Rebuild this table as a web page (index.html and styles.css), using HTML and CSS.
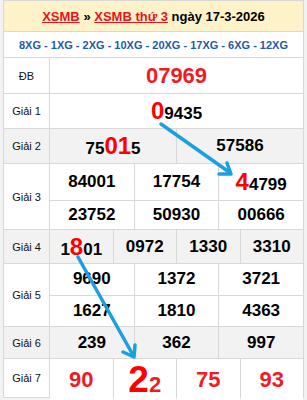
FILE: index.html
```html
<!DOCTYPE html>
<html lang="vi">
<head>
<meta charset="utf-8">
<title>XSMB thứ 3</title>
<link rel="stylesheet" href="styles.css">
</head>
<body>
<div class="page">
  <div class="board">
    <div class="title"><span><a href="#">XSMB</a> » <a href="#">XSMB thứ 3</a> ngày 17-3-2026</span></div>
    <div class="nav"><span>8XG - 1XG - 2XG - 10XG - 20XG - 17XG - 6XG - 12XG</span></div>

    <div class="label r-db">ĐB</div>
    <div class="cells c1 r-db"><div class="num db"><span>07969</span></div></div>

    <div class="label r-g1">Giải 1</div>
    <div class="cells c1 r-g1"><div class="num"><span><span class="hi">0</span>9435</span></div></div>

    <div class="label r-g2 alt">Giải 2</div>
    <div class="cells c2 r-g2 alt">
      <div class="num"><span>75<span class="hi">01</span>5</span></div>
      <div class="num"><span>57586</span></div>
    </div>

    <div class="label r-g3">Giải 3</div>
    <div class="cells c3 r-g3">
      <div class="num"><span>84001</span></div>
      <div class="num"><span>17754</span></div>
      <div class="num"><span><span class="hi">4</span>4799</span></div>
      <div class="num"><span>23752</span></div>
      <div class="num"><span>50930</span></div>
      <div class="num"><span>00666</span></div>
    </div>

    <div class="label r-g4 alt">Giải 4</div>
    <div class="cells c4 r-g4 alt">
      <div class="num"><span>1<span class="hi">8</span>01</span></div>
      <div class="num"><span>0972</span></div>
      <div class="num"><span>1330</span></div>
      <div class="num"><span>3310</span></div>
    </div>

    <div class="label r-g5">Giải 5</div>
    <div class="cells c3 r-g5">
      <div class="num"><span>9690</span></div>
      <div class="num"><span>1372</span></div>
      <div class="num"><span>3721</span></div>
      <div class="num"><span>1627</span></div>
      <div class="num"><span>1810</span></div>
      <div class="num"><span>4363</span></div>
    </div>

    <div class="label r-g6 alt">Giải 6</div>
    <div class="cells c3 r-g6 alt">
      <div class="num"><span>239</span></div>
      <div class="num"><span>362</span></div>
      <div class="num"><span>997</span></div>
    </div>

    <div class="label r-g7">Giải 7</div>
    <div class="cells c4 r-g7">
      <div class="num red"><span>90</span></div>
      <div class="num red"><span><span class="huge">2</span>2</span></div>
      <div class="num red"><span>75</span></div>
      <div class="num red"><span>93</span></div>
    </div>
  </div>

  <svg class="arrows" width="307" height="400" viewBox="0 0 307 400">
    <g fill="none" stroke="#1b9fe0" stroke-width="3.5" stroke-linecap="round" stroke-linejoin="round">
      <path d="M161 124 L229 172"/>
      <path d="M227 163 L231 174 L219 174"/>
      <path d="M78 257 L133 355"/>
      <path d="M135 345 L134 357 L123 352"/>
    </g>
  </svg>
</div>
</body>
</html>
```

FILE: styles.css
```css
* { box-sizing: border-box; }

html, body {
  margin: 0;
  padding: 0;
  background: #f2f2f2;
}

body {
  font-family: "Liberation Sans", Arial, sans-serif;
  color: #000;
}

.page {
  position: relative;
  width: 307px;
  height: 400px;
  overflow: hidden;
}

.board {
  margin-left: 3px;
  width: 301px;
  display: grid;
  grid-template-columns: 45px 1fr;
  grid-template-rows: 30px 25px 35px 34px 34px 65px 33px 62px 31px 38px;
  gap: 1px;
  background: #d8d8d8;
  border: 1px solid #d8d8d8;
}

.title {
  grid-column: 1 / 3;
  background: #fdf2c8;
  display: flex;
  align-items: center;
  justify-content: center;
  font-size: 13px;
  font-weight: bold;
  white-space: nowrap;
}

.title a {
  color: #e8141c;
  text-decoration: underline;
}

.nav {
  grid-column: 1 / 3;
  background: #fff;
  display: flex;
  align-items: center;
  justify-content: center;
  font-size: 11px;
  font-weight: bold;
  color: #1d5ca8;
  white-space: nowrap;
}

.label {
  background: #fff;
  display: flex;
  align-items: center;
  justify-content: center;
  font-size: 11px;
  color: #111;
}

.cells {
  display: grid;
  gap: 1px;
  background: #d8d8d8;
}

.c1 { grid-template-columns: 1fr; }
.c2 { grid-template-columns: 1fr 1fr; }
.c3 { grid-template-columns: 1fr 1fr 1fr; }
.c4 { grid-template-columns: 1fr 1fr 1fr 1fr; }

.num {
  background: #fff;
  display: flex;
  align-items: center;
  justify-content: center;
  font-size: 17px;
  font-weight: bold;
  white-space: nowrap;
}

.alt,
.alt .num {
  background: #f2f2f2;
}

.cells.alt { background: #d8d8d8; }

.db {
  color: #ee1c25;
  font-size: 22px;
}

.hi {
  color: #ff0000;
  font-size: 24px;
}

.red {
  color: #ee1c25;
  font-size: 22px;
}

.r-g7 .num { padding-bottom: 4px; }

.huge {
  color: #ff0000;
  font-size: 37px;
}

.arrows {
  position: absolute;
  left: 0;
  top: 0;
  pointer-events: none;
}
```
